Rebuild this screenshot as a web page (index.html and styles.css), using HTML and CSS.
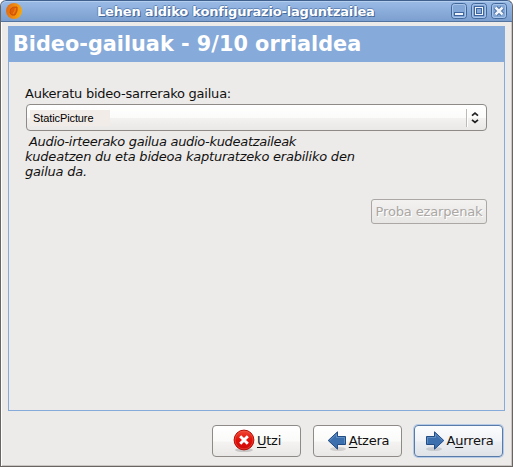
FILE: index.html
```html
<!DOCTYPE html>
<html lang="eu">
<head>
<meta charset="utf-8">
<title>Lehen aldiko konfigurazio-laguntzailea</title>
<link rel="stylesheet" href="styles.css">
</head>
<body>
<div class="window">
  <header class="titlebar">
    <svg class="app-icon" width="16" height="16" viewBox="0 0 16 16">
      <defs><linearGradient id="orb" x1="0" x2="1" y1=".3" y2=".5"><stop offset="0" stop-color="#e06a14"/><stop offset=".5" stop-color="#ee8a10"/><stop offset="1" stop-color="#f6a80c"/></linearGradient></defs>
      <circle cx="8" cy="8" r="8" fill="url(#orb)"/>
      <path d="M4.500 6Q6.500 3.500 11 4Q12 8 9 12Q5 13 4 10Z" fill="#de5f06" stroke="#cc5006"/>
      <path d="M7 11Q9.500 8 9.500 5" stroke="#ea7c10" stroke-width="1.500" fill="none"/>
    </svg>
    <h1 class="title">Lehen aldiko konfigurazio-laguntzailea</h1>
    <div class="controls">
      <svg width="16" height="16" viewBox="0 0 16 16"><rect class="ctl" x=".5" y=".5" width="15" height="15" rx="3"/><rect class="ctl-in" x="1.5" y="1.5" width="13" height="13" rx="2"/><rect class="glyph" x="3.5" y="9.5" width="9" height="3"/></svg>
      <svg width="16" height="16" viewBox="0 0 16 16"><rect class="ctl" x=".5" y=".5" width="15" height="15" rx="3"/><rect class="ctl-in" x="1.5" y="1.5" width="13" height="13" rx="2"/><rect x="3.5" y="3.5" width="9" height="9" class="glyph"/><rect x="5.500" y="5.500" width="5" height="5" fill="#84a8d8" stroke="#3f669e"/></svg>
      <svg width="16" height="16" viewBox="0 0 16 16"><rect class="ctl" x=".5" y=".5" width="15" height="15" rx="3"/><rect class="ctl-in" x="1.5" y="1.5" width="13" height="13" rx="2"/><path d="M4.500 4.500L11.500 11.500M11.500 4.500L4.500 11.500" stroke="#3f669e" stroke-width="4.400"/><path d="M4.500 4.500L11.500 11.500M11.500 4.500L4.500 11.500" stroke="#f2f6fc" stroke-width="2.500"/></svg>
    </div>
  </header>
  <main class="panel">
    <h2 class="page-title">Bideo-gailuak - 9/10 orrialdea</h2>
    <div class="content">
      <div class="label">Aukeratu bideo-sarrerako gailua:</div>
      <div class="combo">
        <span class="value">StaticPicture</span>
        <svg class="arrows" width="20" height="18" viewBox="0 0 20 18"><path d="M.5 0V18" stroke="#bdbbb8"/><path d="M1.500 0V18" stroke="#fff"/><path d="M6 6.600L9 4L12 6.600M6 10.900L9 13.500L12 10.900" fill="none" stroke="#222" stroke-width="1.700"/></svg>
      </div>
      <p class="hint"><span class="lead">Audio-irteerako gailua audio-kudeatzaileak</span><br>kudeatzen du eta bideoa kapturatzeko erabiliko den<br>gailua da.</p>
      <button class="test" disabled>Proba ezarpenak</button>
    </div>
  </main>
  <footer class="actions">
    <button class="btn cancel">
      <svg width="22" height="24" viewBox="0 0 22 24"><defs><linearGradient id="red" x2="0" y2="1"><stop offset="0" stop-color="#f04a38"/><stop offset=".5" stop-color="#e01008"/><stop offset="1" stop-color="#cf0b08"/></linearGradient></defs><ellipse cx="11" cy="21" rx="9" ry="2" fill="#000" opacity=".16"/><circle cx="11" cy="11" r="9.900" fill="url(#red)" stroke="#b40b05"/><circle cx="11" cy="11" r="8.900" fill="none" stroke="#f0614f" stroke-width=".5"/><path d="M7.200 7.200L14.800 14.800M14.800 7.200L7.200 14.800" stroke="#fff" stroke-width="2.900"/></svg>
      <span><u>U</u>tzi</span>
    </button>
    <button class="btn back">
      <svg width="20" height="22" viewBox="0 0 20 22"><ellipse cx="11" cy="19" rx="8" ry="2" fill="#000" opacity=".12"/><path d="M1.200 10.500L10.500 1.800V6.500H18.500V14.500H10.500V19.200Z" fill="#3b6fae" stroke="#234b83"/><path d="M2.700 10.500L9.500 4.100V7.500H17.500V13.500" fill="none" stroke="#7ba4d3" stroke-width=".6"/></svg>
      <span><u>A</u>tzera</span>
    </button>
    <button class="btn next">
      <svg width="20" height="22" viewBox="0 0 20 22"><ellipse cx="9" cy="19" rx="8" ry="2" fill="#000" opacity=".12"/><path d="M18.800 10.500L9.500 1.800V6.500H1.500V14.500H9.500V19.200Z" fill="#3b6fae" stroke="#234b83"/><path d="M17.300 10.500L10.500 4.100V7.500H2.500V13.500" fill="none" stroke="#7ba4d3" stroke-width=".6"/></svg>
      <span>A<u>u</u>rrera</span>
    </button>
  </footer>
</div>
</body>
</html>
```
FILE: styles.css
```css
* { box-sizing: border-box; }
body {
  margin: 0;
  background: #fff;
  font: 13px/15px "DejaVu Sans", sans-serif;
  color: #111;
}
.window {
  width: 513px;
  height: 467px;
  display: flex;
  flex-direction: column;
  background: #edebe9;
  border: 1px solid #696563;
  border-top: 0;
  border-radius: 6px 6px 0 0;
  box-shadow: inset 1px 0 #fff, inset -1px -1px #c8c5c2;
  overflow: hidden;
}
.titlebar {
  height: 22px;
  margin: 0 -1px;
  flex: none;
  display: flex;
  align-items: flex-start;
  padding: 3px 5px 0 6px;
  background: linear-gradient(#9bbbe6, #7b9fcf);
  border: 1px solid #40608e;
  border-bottom-color: #52749f;
  border-radius: 6px 6px 0 0;
  box-shadow: inset 0 1px #b4cef0;
}
.app-icon { margin-left: -1px; margin-top: -1px; }
.title {
  flex: 1;
  margin: 0 0 0 75px;
  font-size: 13px;
  line-height: 15px;
  font-weight: bold;
  letter-spacing: -.18px;
  color: #fff;
  white-space: nowrap;
  text-shadow: 1px 1px #46699c, -1px 0 #6488ba, 0 -1px #6488ba;
}
.controls { display: flex; gap: 4px; margin-top: -1px; }
.controls svg { display: block; }
.ctl { fill: #83a7d7; stroke: #426799; }
.ctl-in { fill: none; stroke: #a9c5ea; }
.glyph { fill: #f2f6fc; stroke: #3f669e; }
.panel {
  width: 497px;
  height: 385px;
  flex: none;
  margin: 4px 0 0 7px;
  border: 1px solid #86aad9;
}
.page-title {
  margin: -1px -1px 0;
  height: 36px;
  padding-left: 5px;
  background: #86aad9;
  color: #fff;
  font-size: 20.8px;
  line-height: 36px;
  font-weight: bold;
  white-space: nowrap;
}
.content {
  display: flex;
  flex-direction: column;
  padding: 24px 17px 0 16px;
}
.label { height: 18px; line-height: 16px; letter-spacing: -.23px; white-space: nowrap; }
.combo {
  width: 461px;
  height: 27px;
  margin-left: 1px;
  display: flex;
  align-items: center;
  justify-content: space-between;
  border: 1px solid #8e8a87;
  border-radius: 4px;
  background: linear-gradient(#fff, #fbfbfa 50%, #f3f2f1 52%, #e9e8e6);
  padding: 0 0 0 3px;
}
.value {
  width: 80px;
  height: 16px;
  padding-left: 3px;
  background: #f1ece8;
  font: 11px/16px "Liberation Sans", sans-serif;
  letter-spacing: -.1px;
  color: #000;
}
.hint {
  margin: 3px 0 0;
  height: 45px;
  font-style: italic;
  line-height: 15px;
  letter-spacing: -.22px;
  white-space: nowrap;
}
.lead { padding-left: 4px; letter-spacing: -.3px; }
.test {
  align-self: flex-end;
  width: 116px;
  height: 25px;
  margin-top: 20px;
  padding: 0;
  border: 1px solid #aaa7a4;
  border-radius: 3px;
  background: linear-gradient(#f3f2f0, #e8e6e4);
  font: 13px/20px "DejaVu Sans", sans-serif;
  letter-spacing: -.14px;
  color: #aaa7a4;
  text-shadow: 1px 1px #fff;
  white-space: nowrap;
}
.actions {
  display: flex;
  justify-content: flex-end;
  gap: 12px;
  padding: 14px 9px 0 0;
}
.btn {
  width: 89px;
  height: 32px;
  display: flex;
  align-items: center;
  justify-content: center;
  gap: 2px;
  padding: 0 0 0 1px;
  border: 1px solid #8e8a87;
  border-radius: 4px;
  background: linear-gradient(#fff, #fafaf9 50%, #f4f3f2 54%, #e9e8e6);
  font: 13px/15px "DejaVu Sans", sans-serif;
  letter-spacing: -.25px;
  color: #111;
  white-space: nowrap;
}
.btn span { margin-top: -1px; }
.btn u { text-underline-offset: 2px; text-decoration-skip-ink: none; }
.next {
  border-color: #587ba9;
  background: linear-gradient(#fbfcfe, #f1f3f6 50%, #eaedf1 54%, #dfe3e8);
  box-shadow: 0 0 0 1px #b5cae6;
}
```
